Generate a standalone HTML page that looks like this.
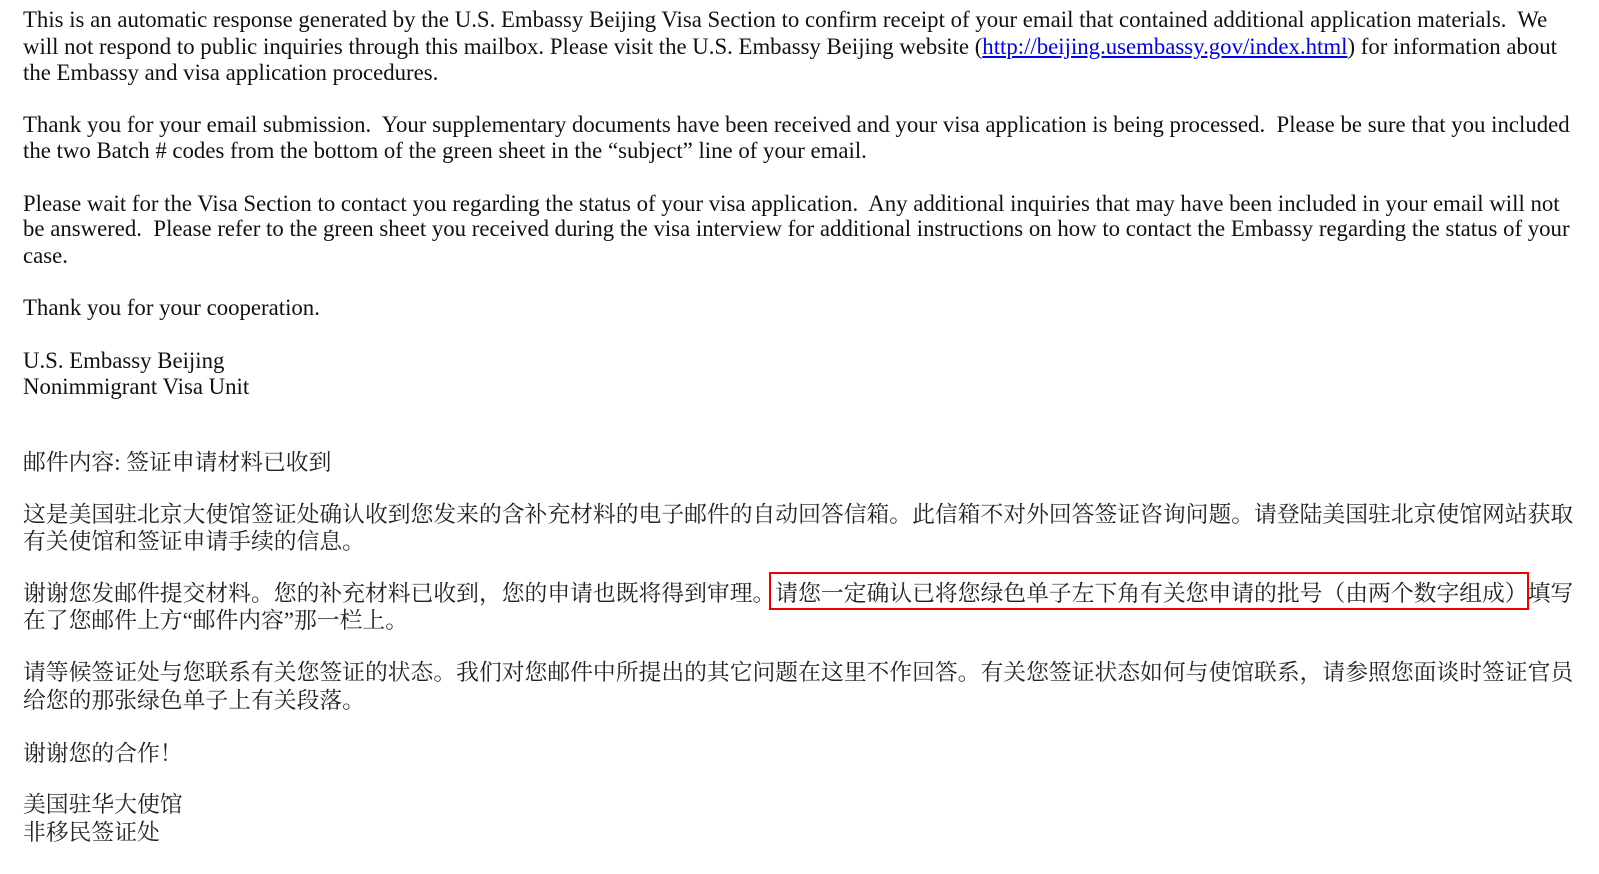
<!DOCTYPE html>
<html><head><meta charset="utf-8"><style>
body{margin:0;background:#fff;width:1599px;height:874px;overflow:hidden;position:relative}
.l{position:absolute;left:23px;white-space:nowrap;font-family:"Liberation Serif","Noto Serif CJK SC",serif;font-size:22.8px;color:#111;line-height:26px}
.c{font-family:"Liberation Serif","Noto Serif CJK SC",serif;font-size:22.8px;color:#222}
a{color:#00e;text-decoration:underline}
.box{position:absolute;left:769px;top:572px;width:756px;height:34px;border:2px solid #e00}
</style></head><body>
<div class="l" style="top:7px">This is an automatic response generated by the U.S. Embassy Beijing Visa Section to confirm receipt of your email that contained additional application materials.&nbsp; We</div>
<div class="l" style="top:34px">will not respond to public inquiries through this mailbox. Please visit the U.S. Embassy Beijing website (<a>http://beijing.usembassy.gov/index.html</a>) for information about</div>
<div class="l" style="top:60px">the Embassy and visa application procedures.</div>
<div class="l" style="top:112px">Thank you for your email submission.&nbsp; Your supplementary documents have been received and your visa application is being processed.&nbsp; Please be sure that you included</div>
<div class="l" style="top:138px">the two Batch # codes from the bottom of the green sheet in the “subject” line of your email.</div>
<div class="l" style="top:191px">Please wait for the Visa Section to contact you regarding the status of your visa application.&nbsp; Any additional inquiries that may have been included in your email will not</div>
<div class="l" style="top:216px">be answered.&nbsp; Please refer to the green sheet you received during the visa interview for additional instructions on how to contact the Embassy regarding the status of your</div>
<div class="l" style="top:243px">case.</div>
<div class="l" style="top:295px">Thank you for your cooperation.</div>
<div class="l" style="top:348px">U.S. Embassy Beijing</div>
<div class="l" style="top:374px">Nonimmigrant Visa Unit</div>
<div class="l c" style="top:450px">邮件内容: 签证申请材料已收到</div>
<div class="l c" style="top:502px">这是美国驻北京大使馆签证处确认收到您发来的含补充材料的电子邮件的自动回答信箱。此信箱不对外回答签证咨询问题。请登陆美国驻北京使馆网站获取</div>
<div class="l c" style="top:529px">有关使馆和签证申请手续的信息。</div>
<div class="l c" style="top:581px">谢谢您发邮件提交材料。您的补充材料已收到，您的申请也既将得到审理。请您一定确认已将您绿色单子左下角有关您申请的批号（由两个数字组成）填写</div>
<div class="l c" style="top:608px">在了您邮件上方“邮件内容”那一栏上。</div>
<div class="l c" style="top:660px">请等候签证处与您联系有关您签证的状态。我们对您邮件中所提出的其它问题在这里不作回答。有关您签证状态如何与使馆联系，请参照您面谈时签证官员</div>
<div class="l c" style="top:688px">给您的那张绿色单子上有关段落。</div>
<div class="l c" style="top:741px">谢谢您的合作！</div>
<div class="l c" style="top:792px">美国驻华大使馆</div>
<div class="l c" style="top:820px">非移民签证处</div>
<div class="box"></div>
</body></html>
